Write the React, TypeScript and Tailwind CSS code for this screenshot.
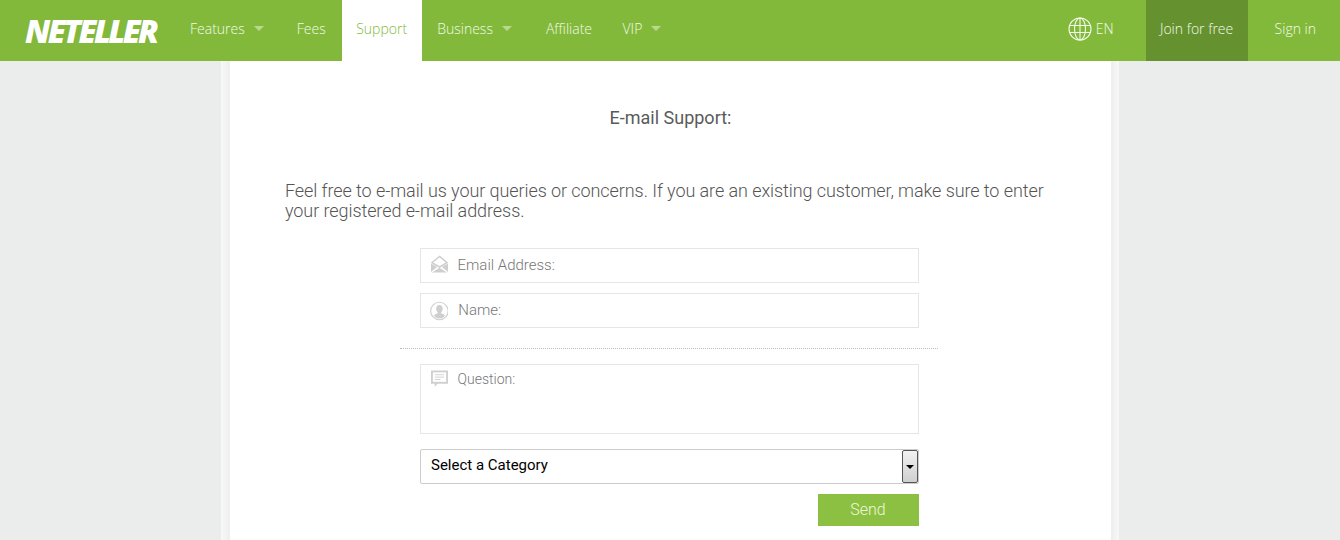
const navItems = [
  { label: "Features", arrow: true, className: "pl-[15px] pr-[18px]" },
  { label: "Fees", className: "pl-[15px] pr-[16px]" },
  { label: "Support", active: true, className: "w-[80px] justify-center" },
  { label: "Business", arrow: true, className: "pl-[15.5px] pr-[18px]" },
  { label: "Affiliate", className: "pl-[16px] pr-[15.5px]" },
  { label: "VIP", arrow: true, className: "pl-[15px] pr-[18px]" },
];

const Arrow = () => <span className="mt-[-1px] ml-[9px] h-0 w-0 border-x-[5px] border-t-[5px] border-x-transparent border-t-[#b9d98f]" />;

const GlobeIcon = () => (
  <svg width="24" height="24" viewBox="0 0 24 24" fill="none" stroke="#f3f9ea" strokeWidth="1.1">
    <circle cx="12" cy="12" r="11" />
    <ellipse cx="12" cy="12" rx="5.5" ry="11" />
    <path d="M12 1v22M1.5 8.5h21M1.5 15.5h21" />
  </svg>
);

const EnvelopeIcon = () => (
  <svg className="mb-[3px]" width="18" height="18" viewBox="0 0 18 18" fill="#cfcfcf">
    <path d="M9 1 17 7.500 9 12.200 1 7.500Z" fill="none" stroke="#cfcfcf" strokeWidth="1.6" />
    <path d="M0 8.500 6.500 12.300 0 17.500ZM18 8.500 11.500 12.300 18 17.500ZM1 18 9 12.900 17 18Z" />
  </svg>
);

const UserIcon = () => (
  <svg width="20" height="20" viewBox="0 0 20 20">
    <circle cx="10" cy="10" r="9.3" fill="none" stroke="#d0d0d0" strokeWidth="1.200" />
    <path d="M10 3.500c2.200 0 3.500 1.700 3.500 4 0 1.600-.7 3-1.600 3.800v1.200c1.800.7 3.400 1.400 4.200 2.600A8 8 0 0 1 10 18a8 8 0 0 1-6.100-2.900c.8-1.200 2.400-1.900 4.200-2.600v-1.200C7.200 10.500 6.500 9.100 6.500 7.500c0-2.300 1.300-4 3.500-4Z" fill="#cfcfcf" />
  </svg>
);

const CommentIcon = () => (
  <svg width="18" height="18" viewBox="0 0 18 18">
    <path d="M0 0h18v14H7l-3 3.500V14H0Z" fill="#d0d0d0" />
    <path d="M2 2h14v10H2Z" fill="#fff" />
    <path d="M4 4.500h10M4 7h10M4 9.500h6" stroke="#d0d0d0" strokeWidth="1" />
  </svg>
);

const Header = () => (
  <header className="flex h-[61px] items-stretch bg-[#82b93b] pb-[3px] font-['Open_Sans',sans-serif] text-sm font-light text-[#f3f9ea]">
    <div className="flex w-[175px] items-center pt-[3px] pl-[25px]">
      <span className="text-[32px] leading-none font-extrabold tracking-[-2.5px] text-white italic">NETELLER</span>
    </div>
    <nav className="flex">
      {navItems.map((item) => (
        <a
          key={item.label}
          className={`flex items-center ${item.className} ${item.active ? "mb-[-3px] bg-white pb-[3px] text-[#82b93b]" : ""}`}
        >
          {item.label}
          {item.arrow && <Arrow />}
        </a>
      ))}
    </nav>
    <div className="ml-auto flex items-center">
      <div className="mr-8 flex items-center gap-1">
        <GlobeIcon />
        <span>EN</span>
      </div>
      <a className="mb-[-3px] flex h-[61px] w-[102px] items-center justify-center bg-[#65922e] pb-[3px]">Join for free</a>
      <a className="flex h-full items-center pr-6 pl-[27px]">Sign in</a>
    </div>
  </header>
);

const inputClass =
  "h-full w-full bg-transparent pb-0.5 text-[15px] font-light text-[#666] outline-none placeholder:text-[#777]";

const ContactForm = () => (
  <form className="mt-[27px] ml-[115px] flex w-[538px] flex-col items-center">
    <div className="flex w-[499px] flex-col gap-2.5">
      <label className="flex h-[35px] items-center gap-[10px] border border-[#e6e6e6] pl-[10px]">
        <EnvelopeIcon />
        <input className={inputClass} placeholder="Email Address:" />
      </label>
      <label className="flex h-[35px] items-center gap-[10px] border border-[#e6e6e6] pl-[9px]">
        <UserIcon />
        <input className={inputClass} placeholder="Name:" />
      </label>
    </div>
    <div className="mt-5 mb-[15px] w-full border-t border-dotted border-[#bbb]" />
    <label className="flex h-[70px] w-[499px] items-start gap-[9px] border border-[#e6e6e6] pt-[5px] pl-[10px]">
      <CommentIcon />
      <textarea className="ml-[1px] h-full w-full resize-none bg-transparent text-sm leading-[18px] font-light outline-none placeholder:text-[#777]" placeholder="Question:" />
    </label>
    <div className="mt-[15px] flex h-[35px] w-[499px] items-center justify-between rounded-[2px] border border-[#ccc] pl-[10px] text-[15px] text-black">
      <span className="mb-0.5 ml-[0.5px]">Select a Category</span>
      <span className="flex h-full w-4 items-center justify-center rounded-[2px] border border-[#555] bg-gradient-to-b from-[#f2f2f2] to-[#cfcfcf]">
        <span className="h-0 w-0 border-x-[4px] border-t-[4px] border-x-transparent border-t-black" />
      </span>
    </div>
    <div className="mt-2.5 flex w-[499px] justify-end">
      <button type="button" className="h-8 w-[101px] bg-[#8cc043] text-base font-light text-[#eef8d8]">
        Send
      </button>
    </div>
  </form>
);

export default function App() {
  return (
    <div className="h-[540px] overflow-hidden bg-[#ebedec] font-['Roboto',sans-serif]">
      <Header />
      <main className="mx-auto flex h-[479px] w-[898px]">
        <div className="w-[9px] bg-gradient-to-r from-[#f8f8f8] to-[#eeeeee]" />
        <div className="flex-1 bg-white px-[55px]">
          <h2 className="pt-[46px] text-center text-lg leading-[21px] text-[#5a5a5a]">E-mail Support:</h2>
          <p className="mt-[53px] text-lg leading-5 font-light tracking-[-0.08px] text-[#555]">
            Feel free to e-mail us your queries or concerns. If you are an existing customer, make sure to enter your registered e-mail address.
          </p>
          <ContactForm />
        </div>
        <div className="w-[8px] bg-gradient-to-r from-[#eeeeee] to-[#f8f8f8]" />
      </main>
    </div>
  );
}
